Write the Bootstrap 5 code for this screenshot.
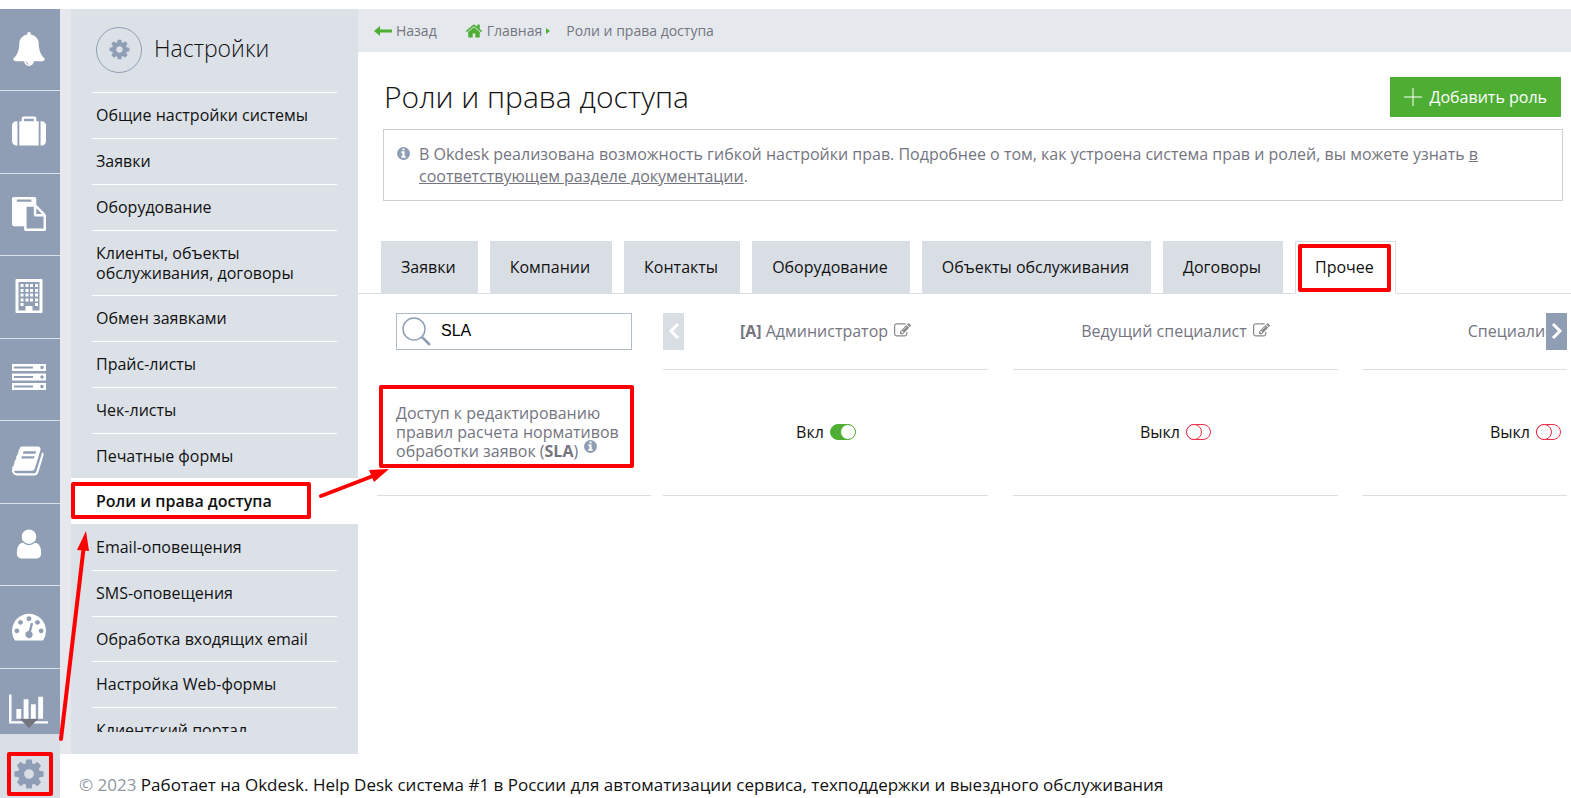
<!DOCTYPE html>
<html lang="ru">
<head>
<meta charset="utf-8">
<meta name="viewport" content="width=device-width, initial-scale=1">
<title>Роли и права доступа — Okdesk</title>
<link rel="stylesheet" href="https://cdn.jsdelivr.net/npm/bootstrap@5.3.0/dist/css/bootstrap.min.css">
<style>
  :root { --steel: #8f9eb4; --panel: #dce1e8; --pale: #e5e9ee; --line: #d9dee5; --muted-text: #74757f; --leaf: #4eae33; }
  body { font-family: "Open Sans", "Noto Sans", sans-serif; font-size: 16px; line-height: 20px; color: #111; background: #fff; }
  a { color: inherit; text-decoration: none; }
  svg { fill: currentColor; flex: none; }
  .app { height: 100vh; min-height: 600px; padding-top: 9px; overflow: hidden; }
  .shrinkable { min-width: 0; min-height: 0; }

  /* icon rail */
  .rail { width: 60px; background: var(--steel); flex: none; }
  .rail a { display: flex; align-items: center; justify-content: center; height: 82px; padding: 0 3px 2px 0; color: #fff; border-bottom: 1px solid var(--panel); flex: none; }
  .rail a:nth-child(even) { height: 83px; }
  .rail a.rail-gear { height: 64px; padding: 16px 3px 0 0; background: #dadee6; color: var(--steel); border: 0; }
  .rail-more { left: 20px; bottom: 6px; border: 9px solid transparent; border-top-color: #74747f; border-bottom: 0; }

  /* settings menu */
  .side { width: 298px; flex: none; background: var(--panel); border-left: 11px solid var(--pale); padding-bottom: 22px; }
  .side-head { height: 83px; gap: 12px; padding: 0 0 2px 25px; }
  .side-ring { width: 46px; height: 46px; border: 1px solid var(--steel); color: var(--steel); }
  .side-head h2 { font-size: 23px; font-weight: 300; line-height: 32px; padding-bottom: 4px; }
  .side li { padding: 0 21px; }
  .side li a { display: block; border-top: 1px solid #fff; padding: 12px 4px 13px; }
  .side li:nth-child(4n) a { padding-bottom: 12px; }
  .side li.current { background: #fff; font-weight: 600; }
  .side li.current + li a { border-top-color: transparent; }

  /* top line and heading */
  .crumbs { height: 43px; background: var(--pale); color: var(--muted-text); font-size: 14px; padding-left: 16px; }
  .crumbs svg { color: var(--leaf); }
  h1 { font-size: 30px; font-weight: 300; line-height: 40px; }
  .head-row { padding: 25px 10px 0 26px; }
  .add-role { height: 40px; background: var(--leaf); color: #fff; border: 0; font-weight: 500; padding: 0 14px; gap: 8px; }
  .note { margin: 12px 8px 0 25px; border: 1px solid #cbcfd6; padding: 13px 15px 13px 13px; color: var(--muted-text); line-height: 22px; gap: 9px; }
  .note a { text-decoration: underline; }
  .hint { color: var(--steel); }
  .hint-raised { vertical-align: 4px; margin: -4px 0 0 2px; }

  /* tabs */
  .role-tabs { margin-top: 40px; padding-left: 23px; gap: 12px; border-bottom: 1px solid var(--line); }
  .role-tabs .tab-btn { height: 53px; margin-bottom: -1px; padding: 0 21px 2px 19px; border: 1px solid var(--line); background: var(--line); color: #111; }
  .role-tabs .tab-btn.active { background: #fff; border-bottom-color: #fff; }

  /* permissions */
  .perm-area { padding: 0 4px 0 19px; gap: 12px; }
  .perm-left { width: 274px; flex: none; }
  table { border-collapse: separate; border-spacing: 0; table-layout: fixed; }
  th { font-weight: 400; color: var(--muted-text); }
  .find-box { width: 236px; height: 37px; border: 1px solid #b2bcc8; color: #8f9eb4; }
  .find-box input { border: 0; outline: 0; width: 170px; background: none; font: 16px/20px "Liberation Sans", Arial, sans-serif; color: #000; padding: 0 0 2px; }
  .row-head { height: 76px; }
  .row-body { height: 126px; }
  .perm-left .row-head { padding: 19px 0 20px 19px; vertical-align: top; }
  .perm-left .row-body { padding: 0 0 0 19px; border-bottom: 1px solid var(--line); line-height: 19px; }
  .perm-right { overflow: hidden; }
  .perm-right table { width: 1050px; }
  .perm-right th, .perm-right td { padding: 0 25px 0 0; text-align: center; }
  .cell { border-bottom: 1px solid var(--line); display: flex; align-items: center; justify-content: center; gap: 6px; padding-bottom: 2px; }
  .row-head .cell { height: 76px; }
  .row-body .cell { height: 126px; }
  .edit-btn { border: 0; background: none; padding: 0; color: #8b8b8f; display: flex; }
  .pager { top: 19px; width: 21px; height: 37px; border: 0; padding: 0 0 3px; color: #fff; }
  .pager-prev { background: var(--line); }
  .pager-next { background: var(--steel); }
  .pager svg, .search-glass { fill: none; stroke: currentColor; }
  .toggle { appearance: none; position: relative; width: 25px; height: 16px; margin: 1px 0 0; border-radius: 8px; border: 1px solid #f03048; background: #fff; }
  .toggle::before { content: ""; position: absolute; left: -1px; top: -1px; width: 16px; height: 16px; border-radius: 50%; border: 1px solid #f03048; background: #fff; }
  .toggle:checked { background: var(--leaf); border-color: var(--leaf); }
  .toggle:checked::before { left: 9px; border-color: var(--leaf); }

  .foot { height: 44px; padding: 19px 0 0 19px; font-size: 17px; line-height: 24px; flex: none; }
  .foot span { color: #8f98a3; }

  /* red guide marks laid over the interface */
  .guide { position: absolute; border: 4px solid #f00; border-radius: 2px; pointer-events: none; z-index: 5; }
  .guide-gear { inset: 18px 7px 2px 7px; }
  .guide-menu { left: 0; top: 4px; width: 240px; height: 37px; }
  .guide-tab { inset: 2px 4px 1px 2px; }
  .guide-perm { left: 2px; top: 15px; width: 255px; height: 83px; }
  .guide-lines { position: absolute; left: 0; top: 0; pointer-events: none; z-index: 6; fill: #f00; stroke: #f00; }
</style>
<script defer src="https://cdn.jsdelivr.net/npm/bootstrap@5.3.0/dist/js/bootstrap.bundle.min.js"></script>
</head>
<body>
<svg class="d-none" aria-hidden="true">
  <symbol id="cog" viewBox="0 0 1792 1792"><path d="M1152 896q0-106-75-181t-181-75-181 75-75 181 75 181 181 75 181-75 75-181zm512-109v222q0 12-8 23t-20 13l-185 28q-19 54-39 91 35 50 107 138 10 12 10 25t-9 23q-27 37-99 108t-94 71q-12 0-26-9l-138-108q-44 23-91 38-16 136-29 186-7 28-36 28h-222q-14 0-24.500-8.500t-11.500-21.500l-28-184q-49-16-90-37l-141 107q-10 9-25 9-14 0-25-11-126-114-165-168-7-10-7-23 0-12 8-23 15-21 51-66.500t54-70.500q-27-50-41-99l-183-27q-13-2-21-12.500t-8-23.500v-222q0-12 8-23t19-13l186-28q14-46 39-92-40-57-107-138-10-12-10-24 0-10 9-23 26-36 98.500-107.500t94.500-71.500q13 0 26 10l138 107q44-23 91-38 16-136 29-186 7-28 36-28h222q14 0 24.500 8.500t11.500 21.500l28 184q49 16 90 37l142-107q9-9 24-9 13 0 25 10 129 119 165 170 7 8 7 22 0 12-8 23-15 21-51 66.500t-54 70.500q26 50 41 98l183 28q13 2 21 12.500t8 23.500z"/></symbol>
  <symbol id="info" viewBox="0 0 1792 1792"><path d="M1152 1376v-160q0-14-9-23t-23-9h-96v-512q0-14-9-23t-23-9h-320q-14 0-23 9t-9 23v160q0 14 9 23t23 9h96v320h-96q-14 0-23 9t-9 23v160q0 14 9 23t23 9h448q14 0 23-9t9-23zm-128-896v-160q0-14-9-23t-23-9h-192q-14 0-23 9t-9 23v160q0 14 9 23t23 9h192q14 0 23-9t9-23zm640 416q0 209-103 385.500t-279.500 279.500-385.500 103-385.500-103-279.500-279.500-103-385.500 103-385.500 279.500-279.500 385.500-103 385.500 103 279.500 279.500 103 385.500z"/></symbol>
  <symbol id="edit" viewBox="0 0 1792 1792"><path d="M888 1184l116-116-152-152-116 116v56h96v96h56zm440-720q-16-16-33 1l-350 350q-17 17-1 33t33-1l350-350q17-17 1-33zm80 594v190q0 119-84.500 203.500t-203.500 84.500h-832q-119 0-203.500-84.500t-84.500-203.500v-832q0-119 84.500-203.500t203.500-84.500h832q63 0 117 25 15 7 18 23 3 17-9 29l-49 49q-14 14-32 8-23-6-45-6h-832q-66 0-113 47t-47 113v832q0 66 47 113t113 47h832q66 0 113-47t47-113v-126q0-13 9-22l64-64q15-15 35-7t20 29zm-96-738l288 288-672 672h-288v-288zm444 132l-92 92-288-288 92-92q28-28 68-28t68 28l152 152q28 28 28 68t-28 68z"/></symbol>
</svg>

<div class="app d-flex position-relative">
  <nav class="rail d-flex flex-column" aria-label="Разделы">
    <div class="flex-fill overflow-hidden position-relative d-flex flex-column shrinkable">
      <a href="#" aria-label="Уведомления"><svg width="34" height="34" viewBox="0 0 1792 1792"><path d="M912 1696q0-16-16-16-59 0-101.500-42.500t-42.500-101.500q0-16-16-16t-16 16q0 73 51.500 124.500t124.500 51.500q16 0 16-16zm816-288q0 52-38 90t-90 38h-448q0 106-75 181t-181 75-181-75-75-181h-448q-52 0-90-38t-38-90q50-42 91-88t85-119.500 74.500-158.500 50-206 19.500-260q0-152 117-282.500t307-158.500q-8-19-8-39 0-40 28-68t68-28 68 28 28 68q0 20-8 39 190 28 307 158.500t117 282.500q0 139 19.500 260t50 206 74.500 158.500 85 119.500 91 88z"/></svg></a>
      <a href="#" aria-label="Заявки"><svg width="34" height="34" viewBox="0 -128 1792 1792"><path d="M640 256h512v-128h-512v128zm-352 0v1280h-64q-92 0-158-66t-66-158v-832q0-92 66-158t158-66h64zm1120 0v1280h-1024v-1280h128v-160q0-40 28-68t68-28h576q40 0 68 28t28 68v160h128zm384 224v832q0 92-66 158t-158 66h-64v-1280h64q92 0 158 66t66 158z"/></svg></a>
      <a href="#" aria-label="Документы"><svg width="34" height="34" viewBox="0 0 1792 1792"><path d="M768 1664h896v-640h-416q-40 0-68-28t-28-68v-416h-384v1152zm256-1440v-64q0-13-9.500-22.500t-22.500-9.500h-704q-13 0-22.500 9.500t-9.500 22.500v64q0 13 9.500 22.500t22.500 9.500h704q13 0 22.500-9.500t9.500-22.500zm256 672h299l-299-299v299zm512 128v672q0 40-28 68t-68 28h-960q-40 0-68-28t-28-68v-160h-544q-40 0-68-28t-28-68v-1344q0-40 28-68t68-28h1088q40 0 68 28t28 68v328q21 13 36 28l408 408q28 28 48 76t20 88z"/></svg></a>
      <a href="#" aria-label="Компании"><svg width="34" height="34" viewBox="0 0 34 34"><path fill-rule="evenodd" d="M4.500 0h25q1 0 1 1v32q0 1-1 1h-25q-1 0-1-1V1q0-1 1-1zM6.500 3v28.500h7V27h7v4.500h7V3z"/><path d="M8.500 5h3v3h-3zm5 0h3v3h-3zm4.500 0h3v3h-3zm5 0h3v3h-3zM8.500 10h3v3h-3zm5 0h3v3h-3zm4.500 0h3v3h-3zm5 0h3v3h-3zM8.500 14.500h3v3h-3zm5 0h3v3h-3zm4.500 0h3v3h-3zm5 0h3v3h-3zM8.500 19.500h3v3h-3zm5 0h3v3h-3zm4.500 0h3v3h-3zm5 0h3v3h-3zM8.500 24h3v3h-3zm14.500 0h3v3h-3z"/></svg></a>
      <a href="#" aria-label="Оборудование"><svg width="34" height="30" viewBox="0 0 34 30"><path fill-rule="evenodd" d="M0 0h34v7H0zM2 2.500v2h19v-2zM0 9.500h34v7H0zM2 12v2h19v-2zM0 19h34v7H0zM2 21.500v2h19v-2zM30 1.700a1.800 1.800 0 100 3.600 1.800 1.800 0 000-3.600zm0 9.500a1.800 1.800 0 100 3.600 1.800 1.800 0 000-3.600zm0 9.500a1.800 1.800 0 100 3.600 1.800 1.800 0 000-3.600z"/></svg></a>
      <a href="#" aria-label="База знаний"><svg width="34" height="34" viewBox="0 0 1792 1792"><path d="M1639 478q40 57 18 129l-275 906q-19 64-76.500 107.500t-122.500 43.500h-923q-77 0-148.500-53.500t-99.500-131.500q-24-67-2-127 0-4 3-27t4-37q1-8-3-21.500t-3-19.500q2-11 8-21t16.500-23.500 16.500-23.500q23-38 45-91.500t30-91.500q3-10 .5-30t-.5-28q3-11 17-28t17-23q21-36 42-92t25-90q1-9-2.500-32t.5-28q4-13 22-30.500t22-22.500q19-26 42.500-84.500t27.500-96.500q1-8-3-25.500t-2-26.500q2-8 9-18t18-23 17-21q8-12 16.500-30.500t15-35 16-36 19.500-32 26.500-23.500 36-11.500 47.500 5.500l-1 3q38-9 51-9h761q74 0 114 56t18 130l-274 906q-36 119-71.500 153.500t-128.500 34.500h-869q-27 0-38 15-11 16-1 43 24 70 144 70h923q29 0 56-15.500t35-41.500l300-987q7-22 5-57 38 15 59 43zm-1064 2q-4 13 2 22.500t20 9.500h608q13 0 25.500-9.500t16.500-22.500l21-64q4-13-2-22.500t-20-9.500h-608q-13 0-25.500 9.500t-16.500 22.500zm-83 256q-4 13 2 22.500t20 9.500h608q13 0 25.500-9.500t16.500-22.500l21-64q4-13-2-22.500t-20-9.500h-608q-13 0-25.500 9.500t-16.500 22.500z"/></svg></a>
      <a href="#" aria-label="Сотрудники"><svg width="34" height="34" viewBox="0 0 1792 1792"><path d="M1536 1399q0 109-62.500 187t-150.500 78h-854q-88 0-150.500-78t-62.500-187q0-85 8.500-160.500t31.500-152 58.500-131 94-89 134.500-34.500q131 128 313 128t313-128q76 0 134.500 34.500t94 89 58.500 131 31.500 152 8.500 160.500zm-256-887q0 159-112.500 271.500t-271.500 112.500-271.500-112.500-112.500-271.500 112.500-271.500 271.500-112.500 271.500 112.500 112.500 271.500z"/></svg></a>
      <a href="#" aria-label="Показатели"><svg width="34" height="34" viewBox="0 0 1792 1792"><path d="M384 1152q0-53-37.500-90.500t-90.500-37.500-90.500 37.500-37.500 90.500 37.500 90.500 90.500 37.500 90.500-37.500 37.500-90.500zm192-448q0-53-37.500-90.500t-90.500-37.500-90.500 37.500-37.500 90.500 37.500 90.500 90.500 37.500 90.500-37.500 37.500-90.500zm428 481l101-382q6-26-7.500-48.500t-38.500-29.500-48 6.500-30 39.500l-101 382q-60 5-107 43.500t-63 98.500q-20 77 20 146t117 89 146-20 89-117q16-60-6-117t-72-91zm660-33q0-53-37.500-90.500t-90.500-37.500-90.500 37.500-37.500 90.500 37.500 90.500 90.500 37.500 90.500-37.500 37.500-90.500zm-640-640q0-53-37.500-90.500t-90.500-37.500-90.500 37.500-37.500 90.500 37.500 90.500 90.500 37.500 90.500-37.500 37.500-90.500zm448 192q0-53-37.500-90.500t-90.500-37.500-90.500 37.500-37.500 90.500 37.500 90.500 90.500 37.500 90.500-37.500 37.500-90.500zm320 448q0 261-141 483-19 29-54 29h-1402q-35 0-54-29-141-221-141-483 0-182 71-348t191-286 286-191 348-71 348 71 286 191 191 286 71 348z"/></svg></a>
      <a href="#" aria-label="Отчёты"><svg width="39" height="34" viewBox="0 0 2048 1792"><path d="M640 896v512h-256v-512h256zm384-512v1024h-256v-1024h256zm1024 1152v128h-2048v-1536h128v1408h1920zm-640-896v768h-256v-768h256zm384-384v1152h-256v-1152h256z"/></svg></a>
      <span class="rail-more position-absolute"></span>
    </div>
    <a href="#" class="rail-gear position-relative" aria-label="Настройки"><svg width="34" height="34"><use href="#cog"/></svg><span class="guide guide-gear"></span></a>
  </nav>

  <div class="d-flex flex-column flex-fill shrinkable">
    <div class="d-flex flex-fill shrinkable">
      <aside class="side d-flex flex-column">
        <div class="side-head d-flex align-items-center flex-shrink-0">
          <span class="side-ring rounded-circle d-flex align-items-center justify-content-center"><svg width="23" height="23"><use href="#cog"/></svg></span>
          <h2 class="m-0">Настройки</h2>
        </div>
        <ul class="list-unstyled m-0 overflow-hidden flex-fill">
          <li><a href="#">Общие настройки системы</a></li>
          <li><a href="#">Заявки</a></li>
          <li><a href="#">Оборудование</a></li>
          <li><a href="#">Клиенты, объекты обслуживания, договоры</a></li>
          <li><a href="#">Обмен заявками</a></li>
          <li><a href="#">Прайс-листы</a></li>
          <li><a href="#">Чек-листы</a></li>
          <li><a href="#">Печатные формы</a></li>
          <li class="current position-relative"><a href="#">Роли и права доступа</a><span class="guide guide-menu"></span></li>
          <li><a href="#">Email-оповещения</a></li>
          <li><a href="#">SMS-оповещения</a></li>
          <li><a href="#">Обработка входящих email</a></li>
          <li><a href="#">Настройка Web-формы</a></li>
          <li><a href="#">Клиентский портал</a></li>
        </ul>
      </aside>

      <main class="flex-fill shrinkable">
        <nav class="crumbs d-flex align-items-center" aria-label="Навигация">
          <a href="#" class="d-flex align-items-center gap-1"><svg width="18" height="10" viewBox="0 0 18 10"><path d="M0 5l6-5v3.500h12v3H6V10z"/></svg>Назад</a>
          <a href="#" class="d-flex align-items-center ms-4 ps-1 gap-1"><svg width="18" height="18" viewBox="0 0 1792 1792"><path d="M1472 992v480q0 26-19 45t-45 19h-384v-384h-256v384h-384q-26 0-45-19t-19-45v-480q0-1 .5-3t.5-3l575-474 575 474q1 2 1 6zm223-69l-62 74q-8 9-21 11h-3q-13 0-21-7l-692-577-692 577q-12 8-24 7-13-2-21-11l-62-74q-8-10-7-23.500t11-21.500l719-599q32-26 76-26t76 26l244 204v-195q0-14 9-23t23-9h192q14 0 23 9t9 23v408l219 182q10 8 11 21.500t-7 23.500z"/></svg>Главная<svg width="4" height="6" viewBox="0 0 4 6"><path d="M0 0l4 3-4 3z"/></svg></a>
          <span class="ms-3">Роли и права доступа</span>
        </nav>

        <div class="head-row d-flex justify-content-between">
          <h1 class="m-0">Роли и права доступа</h1>
          <button type="button" class="add-role d-flex align-items-center"><svg width="18" height="18" viewBox="0 0 18 18"><path d="M8.500 0h1v8.500H18v1H9.500V18h-1V9.500H0v-1h8.500z"/></svg>Добавить роль</button>
        </div>

        <div class="note d-flex align-items-start">
          <svg class="hint mt-1" width="13" height="13" viewBox="0 0 13 13"><use href="#info" x="-1" y="-1" width="15" height="15"/></svg>
          <div>В Okdesk реализована возможность гибкой настройки прав. Подробнее о том, как устроена система прав и ролей, вы можете узнать <a href="#">в соответствующем разделе документации</a>.</div>
        </div>

        <div class="role-tabs d-flex" role="tablist">
          <button type="button" class="tab-btn" role="tab">Заявки</button>
          <button type="button" class="tab-btn" role="tab">Компании</button>
          <button type="button" class="tab-btn" role="tab">Контакты</button>
          <button type="button" class="tab-btn" role="tab">Оборудование</button>
          <button type="button" class="tab-btn" role="tab">Объекты обслуживания</button>
          <button type="button" class="tab-btn" role="tab">Договоры</button>
          <button type="button" class="tab-btn active position-relative" role="tab" aria-selected="true">Прочее<span class="guide guide-tab"></span></button>
        </div>

        <div class="perm-area d-flex">
          <table class="perm-left">
            <tbody>
              <tr><td class="row-head">
                <label class="find-box d-flex align-items-center"><svg class="search-glass ms-1" width="32" height="32" viewBox="0 0 32 32"><circle cx="13" cy="13" r="11" stroke-width="1.500"/><path d="M21 21l8 8" stroke-width="2.500"/></svg><input class="ms-2" type="text" value="SLA" aria-label="Поиск права"></label>
              </td></tr>
              <tr><th scope="row" class="row-body position-relative">Доступ к редактированию правил расчета нормативов обработки заявок (<b>SLA</b>) <svg class="hint hint-raised" width="13" height="13" viewBox="0 0 13 13"><use href="#info" x="-1" y="-1" width="15" height="15"/></svg><span class="guide guide-perm"></span></th></tr>
            </tbody>
          </table>
          <div class="perm-right flex-fill position-relative shrinkable">
            <table>
              <thead>
                <tr class="row-head">
                  <th scope="col"><div class="cell"><span><b>[A]</b> Администратор</span><button type="button" class="edit-btn" aria-label="Изменить"><svg width="17" height="17"><use href="#edit"/></svg></button></div></th>
                  <th scope="col"><div class="cell"><span>Ведущий специалист</span><button type="button" class="edit-btn" aria-label="Изменить"><svg width="17" height="17"><use href="#edit"/></svg></button></div></th>
                  <th scope="col"><div class="cell"><span>Специалист</span><button type="button" class="edit-btn" aria-label="Изменить"><svg width="17" height="17"><use href="#edit"/></svg></button></div></th>
                </tr>
              </thead>
              <tbody>
                <tr class="row-body">
                  <td><label class="cell">Вкл <input class="toggle" type="checkbox" checked></label></td>
                  <td><label class="cell">Выкл <input class="toggle" type="checkbox"></label></td>
                  <td><label class="cell">Выкл <input class="toggle" type="checkbox"></label></td>
                </tr>
              </tbody>
            </table>
            <button type="button" class="pager pager-prev position-absolute start-0" aria-label="Назад"><svg width="12" height="18" viewBox="0 0 12 18"><path d="M10 2L3 9l7 7" stroke-width="3"/></svg></button>
            <button type="button" class="pager pager-next position-absolute end-0" aria-label="Вперёд"><svg width="12" height="18" viewBox="0 0 12 18"><path d="M2 2l7 7-7 7" stroke-width="3"/></svg></button>
          </div>
        </div>
      </main>
    </div>
    <footer class="foot"><span>© 2023</span> Работает на Okdesk. Help Desk система #1 в России для автоматизации сервиса, техподдержки и выездного обслуживания</footer>
  </div>

  <svg class="guide-lines" width="400" height="760" viewBox="0 0 400 760" aria-hidden="true">
    <path d="M61 739L83.500 549M321 496l52-20" stroke-width="4" stroke-linecap="round" fill="none"/>
    <path d="M86 531l3 20-12-1zM389 469l-20 1 5 12z" stroke="none"/>
  </svg>
</div>
</body>
</html>
